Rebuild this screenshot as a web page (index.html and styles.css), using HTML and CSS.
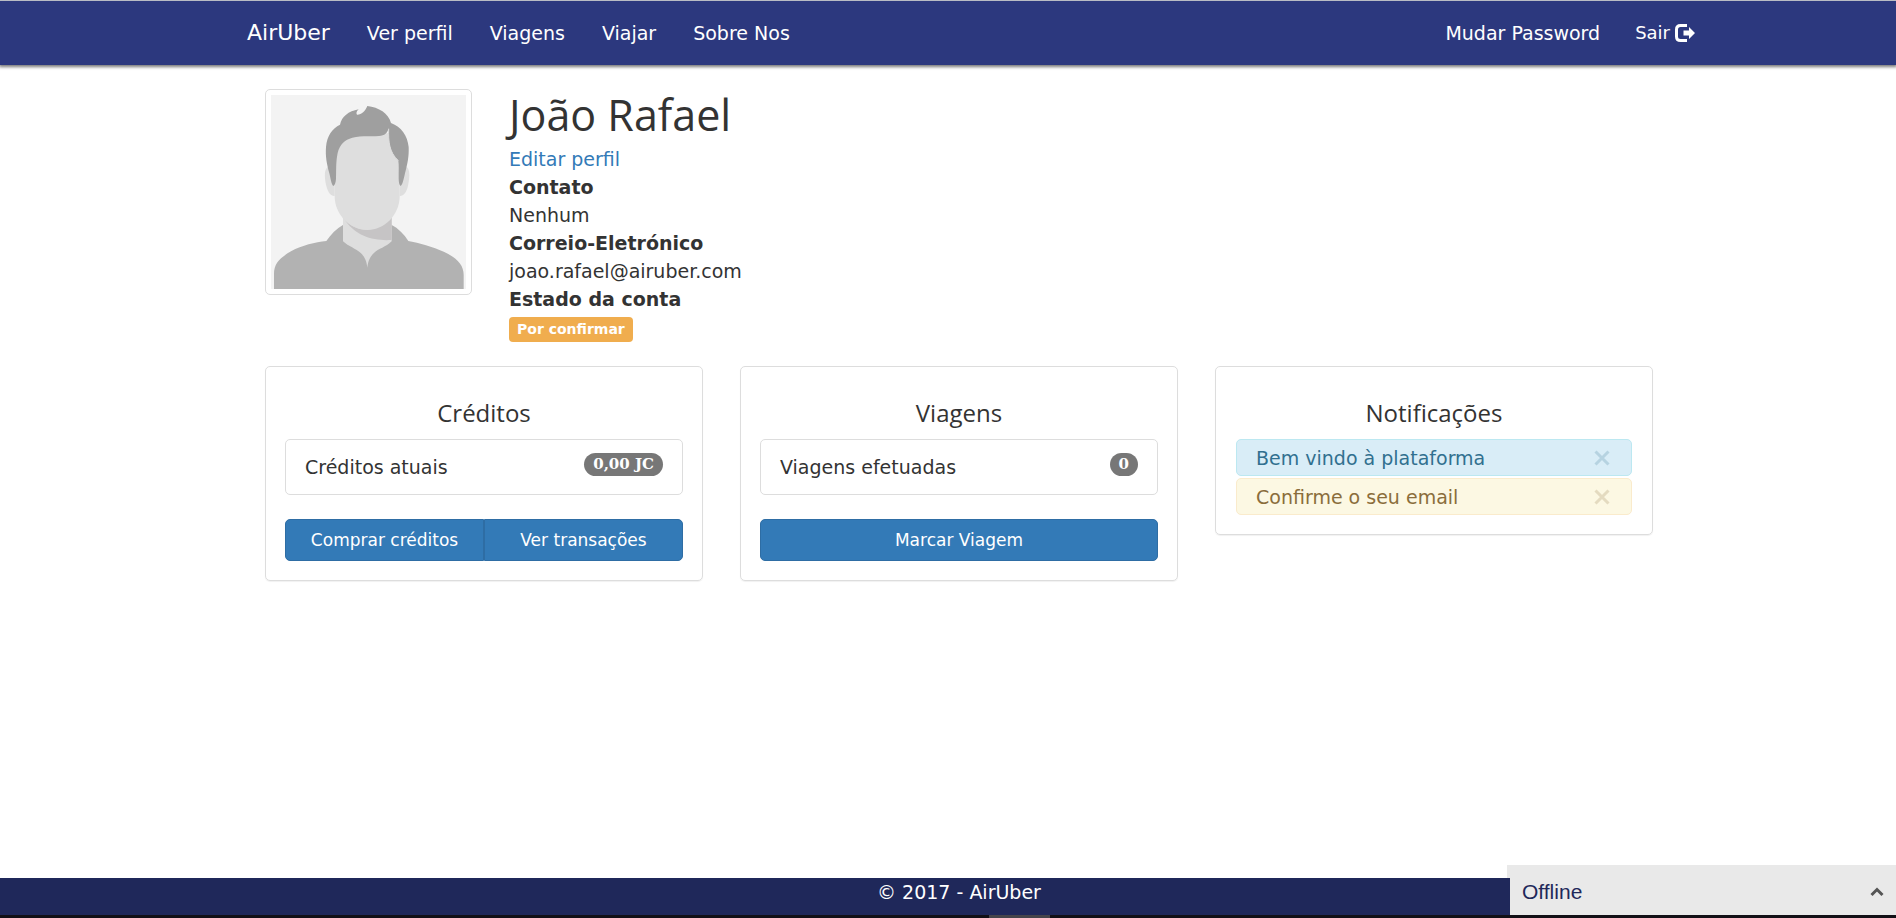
FILE: index.html
```html
<!DOCTYPE html>
<html lang="pt">
<head>
<meta charset="utf-8">
<title>AirUber</title>
<link rel="stylesheet" href="styles.css">
</head>
<body>
<header class="navbar">
  <nav class="container navbar-inner">
    <a class="brand" href="#">AirUber</a>
    <a href="#">Ver perfil</a>
    <a href="#">Viagens</a>
    <a href="#">Viajar</a>
    <a href="#">Sobre Nos</a>
    <div class="navbar-right">
      <a href="#">Mudar Password</a>
      <a class="logout" href="#">Sair
        <svg class="logout-icon" viewBox="0 0 20 18" aria-hidden="true">
          <path d="M12 1.500H5.500Q1.500 1.500 1.500 5.500V12.500Q1.500 16.500 5.500 16.500H12" fill="none" stroke="currentColor" stroke-width="3"/>
          <path d="M8.500 6.500H14V3L20 9L14 15V11.500H8.500Z" fill="currentColor"/>
        </svg>
      </a>
    </div>
  </nav>
</header>

<main class="container page">
  <section class="profile">
    <div class="thumbnail">
      <svg viewBox="48 45 585 582" role="img" aria-label="Fotografia de perfil">
        <rect x="48" y="45" width="585" height="582" fill="#f3f3f3"/>
        <path d="M57 627V585C56 552 72 535 108 514C142 495 180 487 214 483C228 462 244 446 265 434H409C430 445 447 462 460 483C493 489 532 500 568 516C608 535 626 556 626 585V627Z" fill="#b2b2b2"/>
        <path d="M264 405H410V484C392 502 371 505 356 520C343 533 339 546 337 563C335 546 331 533 318 520C302 505 281 500 264 484Z" fill="#dedede"/>
        <path d="M264 412C285 440 312 450 337 449C367 448 393 432 410 412V480C360 483 302 473 264 412Z" fill="#c6c4c5"/>
        <path d="M217 262C206 272 209 300 215 322C220 338 227 349 239 348V262ZM456 262C467 272 463 300 458 322C453 338 446 349 434 348V262Z" fill="#dedede"/>
        <path d="M239 160H434V348C434 405 388 450 337 450C286 450 239 405 239 348Z" fill="#dedede"/>
        <path d="M235 318C229 314 227 296 223 280C215 250 211 229 213 201C216 167 232 145 255 134C260 110 280 94 311 88C304 94 303 100 306 104C318 105 331 94 337 78C371 82 401 100 408 129C439 141 458 167 461 201C462 229 458 250 450 280C446 298 443 314 437 318C431 314 431 300 431 285C431 270 432 256 430 242C410 222 400 198 400 146C398 158 389 167 372 168C345 170 318 166 292 173C269 179 254 194 248 219C242 248 244 275 243 296C242 309 239 316 235 318Z" fill="#9f9f9f"/>
        <path d="M401 146C400 185 402 216 430 242" fill="none" stroke="#dedede" stroke-width="3"/>
      </svg>
    </div>
    <div class="details">
      <h1>João Rafael</h1>
      <a class="edit" href="#">Editar perfil</a>
      <dl>
        <dt>Contato</dt>
        <dd>Nenhum</dd>
        <dt>Correio-Eletrónico</dt>
        <dd>joao.rafael@airuber.com</dd>
        <dt>Estado da conta</dt>
        <dd><span class="label">Por confirmar</span></dd>
      </dl>
    </div>
  </section>

  <div class="cards">
    <section class="card">
      <h2>Créditos</h2>
      <div class="item"><span>Créditos atuais</span><span class="badge">0,00 JC</span></div>
      <div class="actions">
        <button type="button">Comprar créditos</button>
        <button type="button">Ver transações</button>
      </div>
    </section>
    <section class="card">
      <h2>Viagens</h2>
      <div class="item"><span>Viagens efetuadas</span><span class="badge">0</span></div>
      <div class="actions">
        <button type="button">Marcar Viagem</button>
      </div>
    </section>
    <section class="card">
      <h2>Notificações</h2>
      <div class="alerts">
        <div class="alert info"><span>Bem vindo à plataforma</span>
          <button class="close" type="button" aria-label="Fechar"><svg viewBox="0 0 16 16"><path d="M1.500 1.500L14.500 14.500M14.500 1.500L1.500 14.500"/></svg></button></div>
        <div class="alert warning"><span>Confirme o seu email</span>
          <button class="close" type="button" aria-label="Fechar"><svg viewBox="0 0 16 16"><path d="M1.500 1.500L14.500 14.500M14.500 1.500L1.500 14.500"/></svg></button></div>
      </div>
    </section>
  </div>
</main>

<footer class="footer">© 2017 - AirUber</footer>
<div class="edge"><span class="edge-tab"></span></div>

<button class="chat" type="button">
  <span>Offline</span>
  <svg viewBox="0 0 14 10" aria-hidden="true"><path d="M1.500 8L7 2.500L12.500 8"/></svg>
</button>
</body>
</html>
```
FILE: styles.css
```css
* { box-sizing: border-box; }

body {
  margin: 0;
  min-height: 100vh;
  display: flex;
  flex-direction: column;
  background: #fff;
  color: #333;
  font: 19px/28px "DejaVu Sans", Verdana, sans-serif;
}

a { text-decoration: none; }
button { font-family: inherit; cursor: pointer; }

.container {
  width: 100%;
  max-width: 1424px;
  margin: 0 auto;
}

.navbar, .page, .footer { padding-left: 22px; }

.navbar {
  background: #2c387e;
  border-top: 1px solid #b9bcc4;
  box-shadow: 0 1px 3px 1px #777;
}

.navbar-inner {
  display: flex;
  align-items: center;
  gap: 37px;
  height: 64px;
}
.navbar a { color: #fff; }
.navbar .brand { font-size: 22px; }
.navbar-right {
  display: flex;
  align-items: center;
  gap: 35px;
  margin-left: auto;
  margin-right: -24px;
}
.navbar .logout {
  display: flex;
  align-items: center;
  gap: 5px;
  font-size: 18px;
}
.logout-icon { width: 20px; height: 18px; }

.page {
  flex: 1;
  max-width: 1410px;
  padding-top: 24px;
}

.profile {
  display: flex;
  align-items: flex-start;
  gap: 37px;
}
.thumbnail {
  width: 207px;
  padding: 5px;
  border: 1px solid #ddd;
  border-radius: 5px;
}
.thumbnail svg { display: block; width: 100%; }

.details h1 {
  margin: 0 0 4px;
  font: 400 43px/52px "Open Sans", "Segoe UI", sans-serif;
}
.edit { display: block; color: #337ab7; }
.details dl, .details dd { margin: 0; }
.details dt { font-weight: 700; }
.label {
  display: block;
  width: max-content;
  margin-top: 4px;
  padding: 0 8px;
  border-radius: 4px;
  background: #f0ad4e;
  color: #fff;
  font-size: 14px;
  font-weight: 700;
  line-height: 25px;
}

.cards {
  display: grid;
  grid-template-columns: repeat(3, 1fr);
  align-items: start;
  gap: 37px;
  margin-top: 24px;
}
.card {
  padding: 32px 19px 19px;
  border: 1px solid #ddd;
  border-radius: 5px;
  box-shadow: 0 1px 1px rgba(0, 0, 0, .06);
}
.card h2 {
  margin: 0 0 12px;
  text-align: center;
  font: 400 24px/28px "Open Sans", "Segoe UI", sans-serif;
}

.item {
  display: flex;
  justify-content: space-between;
  align-items: flex-start;
  padding: 13px 19px;
  border: 1px solid #ddd;
  border-radius: 5px;
}
.badge {
  padding: 0 9px;
  border-radius: 12px;
  background: #777;
  color: #fff;
  font: 700 15px/23px "DejaVu Serif", serif;
}

.actions {
  display: flex;
  margin-top: 24px;
}
.actions button {
  flex: 1;
  height: 42px;
  padding: 0;
  border: 1px solid #2e6da4;
  background: #337ab7;
  color: #fff;
  font-size: 17px;
}
.actions button:first-child { border-radius: 5px 0 0 5px; }
.actions button:last-child { border-radius: 0 5px 5px 0; }
.actions button:only-child { border-radius: 5px; }

.alerts { display: grid; gap: 2px; margin: 0 1px; }
.alert {
  display: flex;
  justify-content: space-between;
  align-items: center;
  height: 37px;
  padding: 0 21px 0 19px;
  border: 1px solid;
  border-radius: 5px;
}
.info { background: #d9edf7; border-color: #bce8f1; color: #31708f; }
.warning { background: #fcf8e3; border-color: #faebcc; color: #8a6d3b; }
.close {
  display: flex;
  padding: 0;
  border: 0;
  background: none;
  color: inherit;
  opacity: .2;
}
.close svg { width: 16px; height: 16px; }
.close path { fill: none; stroke: currentColor; stroke-width: 3; }

.footer {
  height: 37px;
  background: #1f285a;
  color: #fff;
  text-align: center;
}

.edge {
  display: flex;
  justify-content: center;
  height: 3px;
  padding-left: 143px;
  background: #121016;
}
.edge-tab { width: 61px; background: #45444a; }

.chat {
  position: fixed;
  right: 0;
  bottom: 3px;
  display: flex;
  align-items: center;
  justify-content: space-between;
  width: 386px;
  height: 50px;
  padding: 4px 12px 0 12px;
  border: 0;
  background: #e9e9e9;
  color: #1f285a;
  font: 21px/28px "Liberation Sans", Arial, sans-serif;
}
.chat::before {
  content: "";
  position: absolute;
  top: 0;
  left: -3px;
  width: 3px;
  height: 13px;
  background: #e9e9e9;
}
.chat svg { width: 14px; height: 10px; }
.chat path { fill: none; stroke: #555; stroke-width: 3; }
```
